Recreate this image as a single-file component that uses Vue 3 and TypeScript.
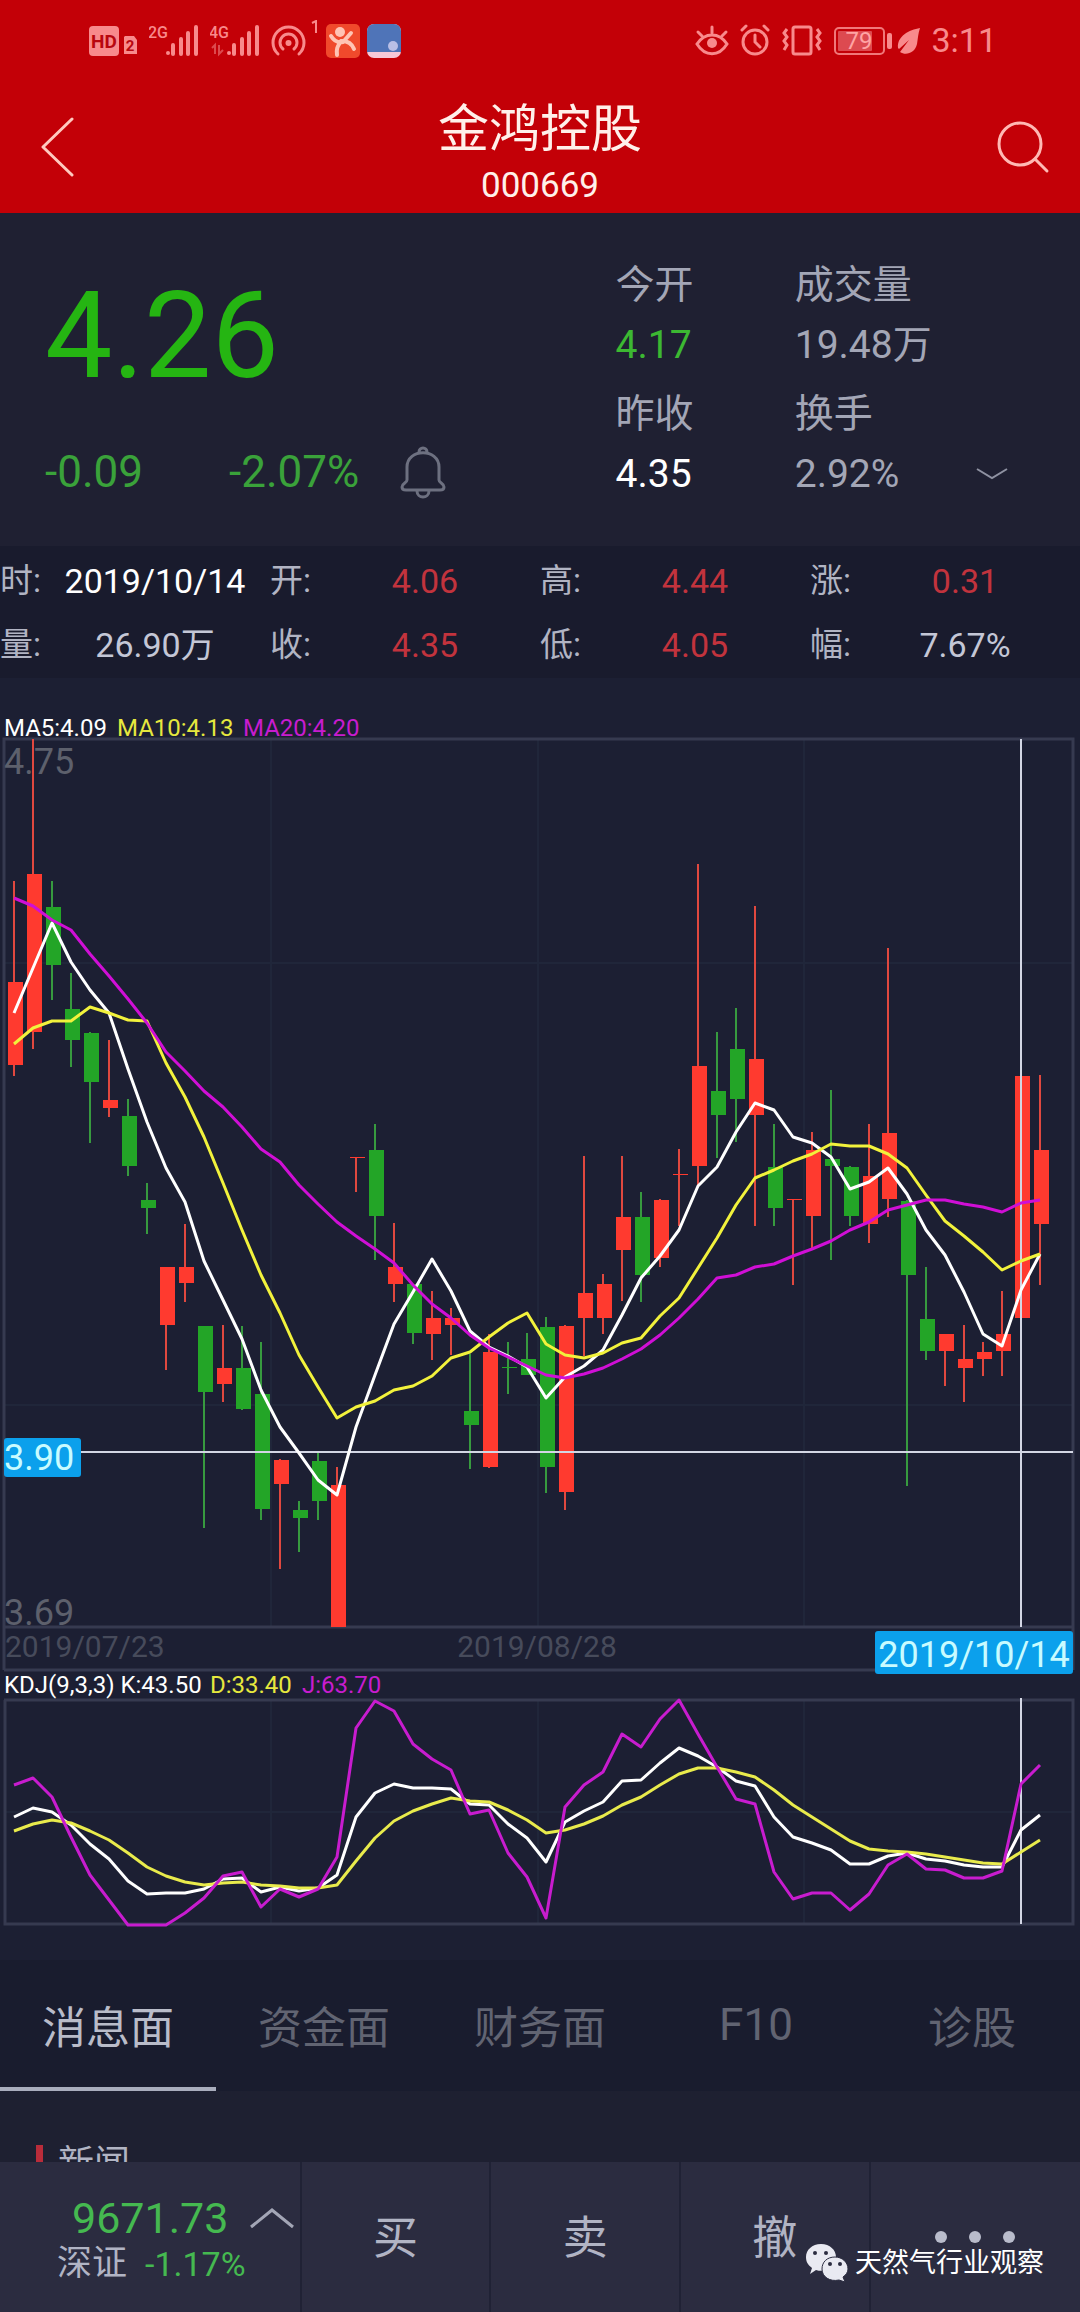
<script setup lang="ts">
import { ref } from 'vue'

type Candle = { up: boolean; high: number; top: number; bottom: number; low: number }

const STEP = 19
const FIRST = 14
const xAt = (i: number): number => FIRST + i * STEP
const line = (ys: number[]): string => ys.map((y, i) => `${xAt(i)},${y}`).join(' ')

// colour flag (1 = red), wick top, body top, body bottom, wick bottom
const rows: number[][] = [
  [1, 881, 982, 1065, 1076], [1, 739, 874, 1032, 1049], [0, 881, 907, 965, 1000],
  [0, 973, 1009, 1040, 1067], [0, 1032, 1033, 1082, 1143], [1, 1040, 1100, 1108, 1117],
  [0, 1099, 1116, 1166, 1176], [0, 1183, 1200, 1208, 1234], [1, 1267, 1267, 1325, 1370],
  [1, 1224, 1267, 1283, 1302], [0, 1326, 1326, 1392, 1528], [1, 1325, 1368, 1384, 1402],
  [0, 1326, 1368, 1409, 1410], [0, 1342, 1394, 1509, 1520], [1, 1459, 1460, 1484, 1569],
  [0, 1501, 1510, 1518, 1552], [0, 1452, 1461, 1501, 1520], [1, 1467, 1485, 1627, 1627],
  [1, 1158, 1157, 1158, 1192], [0, 1124, 1150, 1216, 1260], [1, 1223, 1267, 1284, 1302],
  [0, 1284, 1284, 1333, 1344], [1, 1291, 1318, 1334, 1360], [1, 1308, 1318, 1325, 1355],
  [0, 1354, 1411, 1425, 1469], [1, 1334, 1352, 1467, 1468], [0, 1342, 1367, 1368, 1394],
  [0, 1333, 1359, 1375, 1375], [0, 1317, 1327, 1467, 1493], [1, 1325, 1326, 1492, 1510],
  [1, 1156, 1293, 1318, 1356], [1, 1274, 1284, 1318, 1334], [1, 1156, 1217, 1250, 1301],
  [0, 1192, 1217, 1275, 1302], [1, 1199, 1200, 1258, 1267], [1, 1149, 1174, 1175, 1226],
  [1, 864, 1066, 1166, 1187], [0, 1032, 1091, 1115, 1158], [0, 1008, 1049, 1099, 1142],
  [1, 906, 1059, 1115, 1226], [0, 1124, 1167, 1208, 1226], [1, 1200, 1199, 1200, 1285],
  [1, 1132, 1150, 1216, 1250], [0, 1090, 1159, 1166, 1260], [0, 1166, 1167, 1216, 1226],
  [1, 1124, 1176, 1224, 1243], [1, 948, 1133, 1199, 1217], [0, 1200, 1201, 1275, 1486],
  [0, 1267, 1319, 1351, 1360], [1, 1334, 1334, 1351, 1386], [1, 1325, 1359, 1368, 1402],
  [1, 1342, 1352, 1359, 1376], [1, 1291, 1334, 1351, 1376], [1, 998, 1076, 1318, 1327],
  [1, 1075, 1150, 1224, 1285],
]
const candles: Candle[] = rows.map(([c, high, top, bottom, low]) => ({ up: c === 1, high, top, bottom, low }))

const ma5 = line([
  1013, 968, 923, 962, 990, 1013, 1069, 1122, 1168, 1202, 1261, 1300, 1339, 1390, 1427, 1453, 1480, 1495,
  1427, 1375, 1324, 1292, 1259, 1291, 1331, 1347, 1356, 1367, 1398, 1377, 1366, 1350, 1315, 1278, 1256, 1230,
  1186, 1167, 1132, 1103, 1110, 1137, 1143, 1157, 1189, 1182, 1168, 1194, 1230, 1255, 1292, 1334, 1346, 1290, 1254,
])
const ma10 = line([
  1044, 1028, 1021, 1021, 1007, 1013, 1020, 1021, 1063, 1097, 1137, 1183, 1230, 1275, 1313, 1355, 1387, 1418,
  1407, 1401, 1390, 1386, 1376, 1358, 1352, 1337, 1323, 1313, 1344, 1355, 1358, 1353, 1343, 1338, 1316, 1298,
  1268, 1238, 1205, 1178, 1170, 1161, 1154, 1144, 1146, 1146, 1154, 1168, 1195, 1221, 1236, 1252, 1270, 1261, 1254,
])
const ma20 = line([
  898, 906, 920, 930, 954, 976, 999, 1023, 1052, 1071, 1091, 1107, 1127, 1149, 1162, 1185, 1204, 1222,
  1236, 1249, 1263, 1285, 1304, 1318, 1335, 1348, 1357, 1366, 1375, 1378, 1374, 1368, 1359, 1349, 1335, 1318,
  1299, 1278, 1275, 1267, 1264, 1256, 1249, 1241, 1230, 1222, 1210, 1205, 1200, 1200, 1204, 1207, 1212, 1203, 1200,
])
const kLine = line([
  1817, 1808, 1812, 1825, 1844, 1859, 1881, 1894, 1893, 1893, 1889, 1879, 1878, 1892, 1887, 1891, 1888, 1875,
  1817, 1793, 1784, 1788, 1788, 1789, 1804, 1805, 1824, 1838, 1862, 1822, 1811, 1802, 1781, 1780, 1763, 1748,
  1756, 1767, 1781, 1786, 1817, 1837, 1843, 1850, 1864, 1864, 1856, 1853, 1859, 1861, 1865, 1867, 1867, 1830, 1815,
])
const dLine = line([
  1831, 1824, 1820, 1823, 1831, 1840, 1853, 1867, 1876, 1882, 1885, 1883, 1882, 1885, 1886, 1888, 1888, 1885,
  1861, 1838, 1821, 1811, 1804, 1798, 1801, 1802, 1810, 1820, 1833, 1830, 1824, 1816, 1805, 1797, 1785, 1774,
  1768, 1768, 1772, 1777, 1790, 1805, 1817, 1829, 1841, 1849, 1851, 1852, 1854, 1857, 1860, 1863, 1864, 1852, 1840,
])
const jLine = line([
  1785, 1778, 1797, 1837, 1875, 1900, 1925, 1925, 1925, 1913, 1898, 1876, 1872, 1907, 1889, 1897, 1889, 1857,
  1728, 1701, 1711, 1744, 1759, 1770, 1814, 1810, 1853, 1877, 1918, 1807, 1785, 1772, 1734, 1747, 1719, 1700,
  1734, 1767, 1799, 1804, 1872, 1899, 1893, 1893, 1910, 1894, 1865, 1854, 1869, 1870, 1878, 1878, 1871, 1784, 1765,
])

const dayStats = [
  { label: '时:', value: '2019/10/14', tone: 'white' },
  { label: '开:', value: '4.06', tone: 'red' },
  { label: '高:', value: '4.44', tone: 'red' },
  { label: '涨:', value: '0.31', tone: 'red' },
  { label: '量:', value: '26.90万', tone: 'soft' },
  { label: '收:', value: '4.35', tone: 'red' },
  { label: '低:', value: '4.05', tone: 'red' },
  { label: '幅:', value: '7.67%', tone: 'soft' },
]

const tabs = ['消息面', '资金面', '财务面', 'F10', '诊股']
const activeTab = ref(0)
const trades = ['买', '卖', '撤']
</script>

<template>
  <div class="page">
    <header class="top">
      <div class="status">
        <div class="status-group left">
          <svg width="50" height="40" viewBox="0 0 50 40">
            <rect x="1" y="6" width="30" height="30" rx="4" fill="#f88a8c" />
            <text x="16" y="28" text-anchor="middle" font-size="19" font-weight="700" fill="#b8070f">HD</text>
            <path d="M37 16h9l3 4v14H36V17z" fill="#f88a8c" />
            <text x="42" y="31" text-anchor="middle" font-size="15" font-weight="700" fill="#b8070f">2</text>
          </svg>
          <svg width="50" height="40" viewBox="0 0 50 40" fill="#f88a8c">
            <text x="-1" y="18" font-size="16" font-weight="500">2G</text>
            <circle cx="19" cy="33" r="2" />
            <path d="M24 25v9M32 19v15M39 13v21M47 7v27" stroke="#f88a8c" stroke-width="4" stroke-linecap="round" />
          </svg>
          <svg width="50" height="40" viewBox="0 0 50 40" fill="#f88a8c">
            <text x="-1" y="18" font-size="16" font-weight="500">4G</text>
            <path d="M2 28l3-3v9M9 25v9l4-4" fill="none" stroke="#dc4a4e" stroke-width="2" />
            <circle cx="19" cy="33" r="2" />
            <path d="M24 25v9M32 19v15M39 13v21M47 7v27" stroke="#f88a8c" stroke-width="4" stroke-linecap="round" />
          </svg>
          <svg width="48" height="40" viewBox="0 0 48 40">
            <g fill="none" stroke="#f88a8c" stroke-width="3" stroke-linecap="round">
              <path d="M7 34a15.500 15.500 0 1 1 21 0" />
              <path d="M12 29a8.500 8.500 0 1 1 11 0" />
            </g>
            <circle cx="17.500" cy="23" r="3" fill="#f88a8c" />
            <path d="M41 3l4-2v12" fill="none" stroke="#f88a8c" stroke-width="2" />
          </svg>
          <svg class="app" width="34" height="40" viewBox="0 0 34 40">
            <rect y="4" width="34" height="34" rx="5" fill="#f04a2c" />
            <circle cx="14" cy="12" r="5" fill="#ffc4b4" />
            <path d="M5 16c3 5 7 7 12 6l8-9M15 21c-3 5-5 7-4 14M16 21c6 0 10 3 12 8" fill="none" stroke="#ffc4b4" stroke-width="4" stroke-linecap="round" />
          </svg>
          <svg class="app" width="34" height="40" viewBox="0 0 34 40">
            <rect y="4" width="34" height="34" rx="7" fill="#f7c8d8" />
            <path d="M0 11a7 7 0 0 1 7-7h20a7 7 0 0 1 7 7v21H0z" fill="#4f74b8" />
            <circle cx="26" cy="26" r="5" fill="#b9bfe6" />
          </svg>
        </div>
        <div class="status-group right">
          <svg width="34" height="40" viewBox="0 0 34 40" fill="none" stroke="#f88a8c" stroke-width="3" stroke-linecap="round">
            <path d="M2 24c8-12 22-12 30 0-8 13-22 13-30 0zM17 7v6M3 12l4 4M31 12l-4 4" />
            <circle cx="17" cy="23" r="5" fill="#f88a8c" stroke="none" />
          </svg>
          <svg width="30" height="40" viewBox="0 0 30 40" fill="none" stroke="#f88a8c" stroke-width="3" stroke-linecap="round">
            <circle cx="15" cy="22" r="12" />
            <path d="M15 15v7l5 5M2 10l4-4M28 10l-4-4" />
          </svg>
          <svg width="42" height="40" viewBox="0 0 42 40" fill="none" stroke="#f88a8c" stroke-width="3">
            <rect x="12" y="7" width="18" height="27" rx="2" />
            <path d="M6 9l-3 4 3 4-3 4 3 4-3 5M36 9l3 4-3 4 3 4-3 4 3 5" />
          </svg>
          <svg width="86" height="40" viewBox="0 0 86 40">
            <rect x="1" y="8" width="49" height="26" rx="4" fill="none" stroke="#f0787a" stroke-width="2" />
            <rect x="4" y="11" width="34" height="20" rx="1" fill="#dd4a50" />
            <text x="25" y="29" text-anchor="middle" font-size="24" fill="#ffa4a4">79</text>
            <rect x="53" y="13" width="5" height="16" rx="2" fill="#f88a8c" />
            <path d="M86 8C75 10 63 16 64 28l1 1 10-9-9 12c6 4 15 1 17-8 1-6 1-10 3-16z" fill="#f88a8c" />
          </svg>
          <span class="time">3:11</span>
        </div>
      </div>
      <div class="titlebar">
        <button class="icon-btn back" aria-label="返回">
          <svg width="34" height="64" viewBox="0 0 34 64" fill="none" stroke="#ffc9bf" stroke-width="3" stroke-linecap="round" stroke-linejoin="round">
            <path d="M32 4L3 32l29 28" />
          </svg>
        </button>
        <div class="title">
          <h1>金鸿控股</h1>
          <p>000669</p>
        </div>
        <button class="icon-btn search" aria-label="搜索">
          <svg width="54" height="54" viewBox="0 0 54 54" fill="none" stroke="#ffb9b4" stroke-width="3" stroke-linecap="round">
            <circle cx="24" cy="24" r="21" />
            <path d="M39 39l12 12" />
          </svg>
        </button>
      </div>
    </header>

    <main class="content">
      <section class="quote">
        <div class="price-col">
          <div class="price">4.26</div>
          <div class="change">
            <span class="diff">-0.09</span>
            <span class="pct">-2.07%</span>
            <button class="icon-btn" aria-label="提醒">
              <svg width="46" height="54" viewBox="0 0 46 54" fill="none" stroke="#6d7080" stroke-width="3">
                <path d="M19 7a4 4 0 1 1 8 0M7 35V22c0-19 32-19 32 0v13c0 3 5 3 5 7 0 2-1 3-4 3H6c-3 0-4-1-4-3 0-4 5-4 5-7zM17 46c0 8 12 8 12 0" />
              </svg>
            </button>
          </div>
        </div>
        <div class="facts">
          <div class="fact"><span>今开</span><span class="green">4.17</span></div>
          <div class="fact"><span>成交量</span><span>19.48万</span></div>
          <div class="fact"><span>昨收</span><span class="white">4.35</span></div>
          <div class="fact">
            <span>换手</span>
            <span class="with-more">2.92%
              <button class="icon-btn" aria-label="展开">
                <svg width="32" height="12" viewBox="0 0 32 12" fill="none" stroke="#8f92a2" stroke-width="2"><path d="M1 1l15 9 15-9" /></svg>
              </button>
            </span>
          </div>
        </div>
      </section>

      <section class="day">
        <div v-for="s in dayStats" :key="s.label" class="day-item">
          <span class="day-label">{{ s.label }}</span>
          <span class="day-value" :class="s.tone">{{ s.value }}</span>
        </div>
      </section>

      <svg class="chart" viewBox="0 678 1080 1282">
        <g stroke="#20263a" stroke-width="2">
          <path d="M271 740V1627M538 740V1627M804 740V1627M4 963H1073M4 1405H1073" />
          <path d="M271 1701V1924M538 1701V1924M804 1701V1924M4 1812H1073" />
        </g>
        <path d="M4 1670V739H1073V1670M4 1627H1073M4 1670H1073M4 1700H1073V1924H5V1700" fill="none" stroke="#363a50" stroke-width="3" />

        <g font-size="36" fill="#5d606c">
          <text x="4" y="774">4.75</text>
          <text x="4" y="1625">3.69</text>
        </g>
        <g font-size="30" fill="#474b5b">
          <text x="5" y="1657">2019/07/23</text>
          <text x="537" y="1657" text-anchor="middle">2019/08/28</text>
        </g>

        <g v-for="(c, i) in candles" :key="i" :class="c.up ? 'c-red' : 'c-green'">
          <line class="wick" :x1="xAt(i)" :x2="xAt(i)" :y1="c.high" :y2="c.low" />
          <rect :x="xAt(i) - 6" :y="c.top" width="15" :height="c.bottom - c.top" />
        </g>

        <g stroke="#d3d6e4" stroke-width="2">
          <path d="M81 1452H1073M1021 739V1627M1021 1698V1924" />
        </g>
        <g class="curves">
          <polyline :points="ma5" stroke="#ffffff" />
          <polyline :points="ma10" stroke="#f2f23c" />
          <polyline :points="ma20" stroke="#d00fd6" />
          <polyline :points="kLine" stroke="#ffffff" />
          <polyline :points="dLine" stroke="#e9eb4c" />
          <polyline :points="jLine" stroke="#c81ccf" />
        </g>

        <g font-size="24">
          <text x="4" y="736" fill="#ffffff">MA5:4.09</text>
          <text x="117" y="736" fill="#e6e83e">MA10:4.13</text>
          <text x="243" y="736" fill="#c81ccf">MA20:4.20</text>
          <text x="4" y="1693" fill="#ffffff">KDJ(9,3,3) K:43.50</text>
          <text x="210" y="1693" fill="#e6e83e">D:33.40</text>
          <text x="302" y="1693" fill="#c81ccf">J:63.70</text>
        </g>

        <g fill="#0ba0ec">
          <rect x="4" y="1438" width="77" height="39" rx="3" />
          <rect x="875" y="1631" width="198" height="43" rx="3" />
        </g>
        <g font-size="36" fill="#c8fbff">
          <text x="4" y="1470">3.90</text>
          <text x="974" y="1667" text-anchor="middle">2019/10/14</text>
        </g>
      </svg>

      <nav class="tabs">
        <button v-for="(t, i) in tabs" :key="t" class="tab" :class="{ active: i === activeTab }" @click="activeTab = i">{{ t }}</button>
      </nav>

      <section class="news">
        <h2>新闻</h2>
      </section>
    </main>

    <footer class="bottom">
      <button class="index">
        <span class="index-top">
          9671.73
          <svg width="44" height="22" viewBox="0 0 44 22" fill="none" stroke="#a3a6b6" stroke-width="3"><path d="M1 20L22 3l21 17" /></svg>
        </span>
        <span class="index-sub"><span>深证</span><span class="index-pct">-1.17%</span></span>
      </button>
      <button v-for="t in trades" :key="t" class="trade">{{ t }}</button>
      <button class="more" aria-label="更多">
        <svg width="80" height="12" viewBox="0 0 80 12" fill="#b9bccb"><circle cx="6" cy="6" r="6" /><circle cx="40" cy="6" r="6" /><circle cx="74" cy="6" r="6" /></svg>
      </button>
      <div class="credit">
        <svg width="42" height="38" viewBox="0 0 42 38">
          <path d="M15 0C6 0 0 6 0 13c0 5 2 8 6 11l-2 6 6-4c9 3 20-2 20-13C30 6 24 0 15 0z" fill="#e9eaf2" />
          <path d="M29 13c-8 0-13 5-13 12 0 8 8 13 17 11l6 2-2-5c3-2 5-5 5-8 0-7-6-12-13-12z" fill="#e9eaf2" stroke="#2b2c40" stroke-width="1" />
          <g fill="#2b2c40"><circle cx="9" cy="9" r="2" /><circle cx="20" cy="9" r="2" /><circle cx="24" cy="20" r="2" /><circle cx="34" cy="20" r="2" /></g>
        </svg>
        <span>天然气行业观察</span>
      </div>
    </footer>
  </div>
</template>

<style>
body {
  margin: 0;
  background: #1c1f31;
}
</style>

<style scoped>
.page {
  display: flex;
  flex-direction: column;
  height: 100vh;
  overflow: hidden;
  font-family: Roboto, "Noto Sans CJK SC", sans-serif;
  background: #1e2031;
  color: #a3a6b6;
}
button {
  padding: 0;
  border: 0;
  background: none;
  color: inherit;
  font: inherit;
}
h1,
h2,
p {
  margin: 0;
  font-weight: 400;
}
svg {
  display: block;
}
.icon-btn {
  display: flex;
  align-items: center;
}
.top {
  flex: none;
  background: #c30007;
}
.status {
  display: flex;
  justify-content: space-between;
  padding: 20px 83px 20px 88px;
  height: 40px;
  color: #f88a8c;
}
.status-group {
  display: flex;
  align-items: center;
}
.left {
  gap: 11px;
}
.app {
  margin-left: -4px;
}
.right {
  gap: 11px;
}
.time {
  font-size: 34px;
  line-height: 40px;
}
.titlebar {
  display: grid;
  grid-template-columns: 1fr auto 1fr;
  align-items: center;
  height: 133px;
  padding: 0 30px;
}
.back {
  padding-left: 10px;
}
.search {
  justify-self: end;
}
.title {
  padding: 15px 0 0;
  text-align: center;
  color: #fff0ea;
}
.title h1 {
  font-size: 51px;
  line-height: 64px;
}
.title p {
  font-size: 35px;
  line-height: 48px;
}
.content {
  flex: 1;
  min-height: 0;
  overflow: hidden;
}
.quote {
  display: flex;
  padding: 42px 0;
  background: #1f2032;
}
.price-col {
  flex: 0 0 57%;
  box-sizing: border-box;
  padding: 0 0 2px 45px;
  display: flex;
  flex-direction: column;
  justify-content: space-between;
}
.price {
  font-size: 120px;
  line-height: 162px;
  color: #25b512;
}
.change {
  display: flex;
  align-items: center;
  font-size: 44px;
  line-height: 60px;
  color: #3aa23a;
}
.diff {
  width: 184px;
}
.pct {
  width: 171px;
}
.facts {
  flex: 1;
  display: grid;
  grid-template-columns: 179fr 285fr;
  row-gap: 9px;
  font-size: 39px;
  line-height: 60px;
}
.fact {
  display: flex;
  flex-direction: column;
}
.with-more {
  display: flex;
  justify-content: space-between;
  padding-right: 72px;
}
.green {
  color: #3cb832;
}
.white {
  color: #ffffff;
}
.red {
  color: #c2333d;
}
.soft {
  color: #c4c7d6;
}
.day {
  display: grid;
  grid-template-columns: repeat(4, 1fr);
  padding: 3px 0 1px;
  background: #191b2d;
  font-size: 33px;
  line-height: 64px;
}
.day-item {
  display: flex;
}
.day-label {
  width: 40px;
  color: #b1b4c3;
}
.day-value {
  flex: 1;
  font-size: 34px;
  text-align: center;
}
.chart {
  width: 100%;
  height: auto;
  background: #1c1f33;
}
.wick {
  stroke-width: 2;
}
.c-red {
  fill: #ff3a2f;
}
.c-red .wick {
  stroke: #e0483f;
}
.c-green {
  fill: #23a527;
}
.c-green .wick {
  stroke: #379a3f;
}
.curves {
  fill: none;
  stroke-width: 3;
  stroke-linejoin: round;
}
.tabs {
  display: flex;
  background: #191c2e;
}
.tab {
  flex: 1;
  height: 131px;
  padding-top: 2px;
  border-bottom: 4px solid transparent;
  font-size: 44px;
  color: #616472;
}
.tab.active {
  border-color: #a9adbd;
  color: #b9bcc9;
}
.news {
  padding: 46px 36px;
}
.news h2 {
  padding-left: 22px;
  font-size: 36px;
  line-height: 54px;
  color: #b1b4c3;
  background: linear-gradient(#b92c3a, #b92c3a) 0 8px / 7px 36px no-repeat;
}
.bottom {
  flex: none;
  position: relative;
  display: flex;
  height: 150px;
  background: #2b2c40;
  color: #b1b4c4;
}
.bottom button {
  border-left: 2px solid #202235;
}
.bottom .index {
  flex: 302;
  border-left: 0;
  padding-top: 8px;
  display: flex;
  flex-direction: column;
  justify-content: center;
}
.index-top {
  display: flex;
  align-items: center;
  gap: 22px;
  padding-left: 72px;
  font-size: 43px;
  line-height: 46px;
  color: #45b950;
}
.index-sub {
  display: flex;
  align-items: center;
  gap: 18px;
  padding-left: 57px;
  font-size: 35px;
  line-height: 46px;
}
.index-pct {
  font-size: 34px;
  color: #45b950;
}
.bottom .trade {
  flex: 189;
  padding-bottom: 6px;
  font-size: 45px;
}
.more {
  flex: 211;
  display: flex;
  justify-content: center;
  align-items: center;
}
.credit {
  position: absolute;
  right: 36px;
  bottom: 30px;
  display: flex;
  align-items: center;
  gap: 7px;
  font-size: 27px;
  line-height: 38px;
  color: #ffffff;
}
</style>
